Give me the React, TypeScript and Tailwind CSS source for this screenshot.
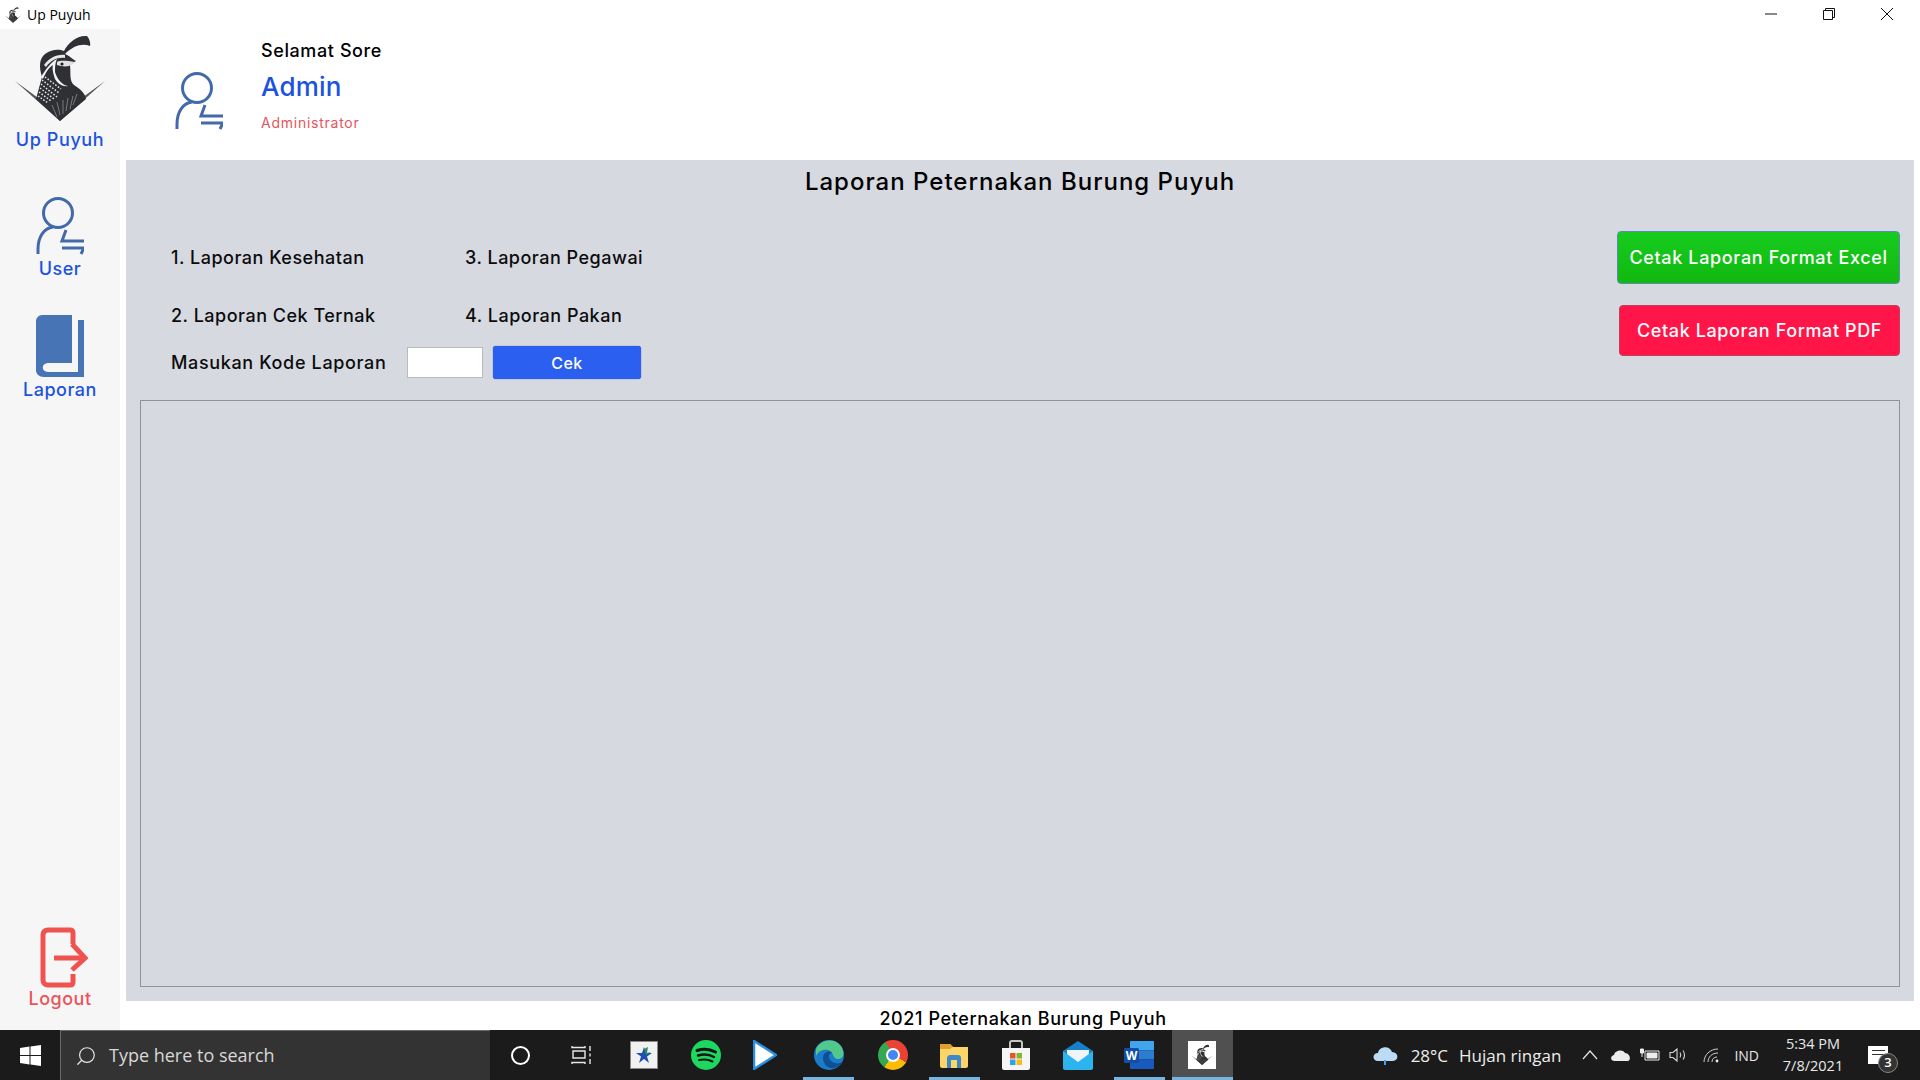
import { Search } from "lucide-react";

const font = "font-['Inter','Liberation_Sans',sans-serif]";
const winFont = "font-['Open_Sans','Noto_Sans',sans-serif]";

function Quail({ className }: { className: string }) {
  return (
    <svg viewBox="0 0 110 100" className={className}>
      <path d="M10 52 L55 92 L100 52 L55 85 Z" fill="#55575a" />
      <path d="M31 70 L37 48 C34 38 34 30 40 25 C47 20 54 20 59 22 C63 14 72 6 82 7 C84 9 86 14 85 17 C77 14 68 17 60 25 C65 27 67 30 71 32 L65 36 C66 44 64 52 69 56 C75 60 80 64 81 70 L55 92 Z" fill="#2f3033" />
      <path d="M36 48 C41 40 46 33 52 30 C50 34 50 38 50 43 C52 50 57 56 63 57 C58 58 53 55 50 50 C48 44 47 39 48 36 C43 39 40 45 38 50 Z" fill="#f4f4f4" />
      <path d="M39 36 C44 29 52 25 60 26 L60 29 C53 28 46 31 41 38 Z" fill="#e8e8e8" />
      <path d="M52 33 C56 31 62 32 70 33 L64 37 C60 38 55 37 52 36 Z" fill="#e2e2e2" />
      <circle cx="57" cy="35" r="1.6" fill="#222" />
      <path d="M37 51 L54 64 M36 55 L52 68 M35 59 L49 70 M34 63 L46 72 M40 48 L56 60 M33 67 L43 74" stroke="#e5e5e5" strokeWidth="1.5" strokeDasharray="1.6 1.6" fill="none" />
      <path d="M47 76 L52 88 M52 73 L55 86 M58 71 L58 85 M63 69 L61 82 M68 67 L65 80 M72 65 L68 76" stroke="#8c8d90" strokeWidth="0.8" fill="none" />
    </svg>
  );
}

function UserIcon({ className }: { className: string }) {
  return (
    <svg viewBox="0 0 48 58" className={className} fill="none" stroke="#4169ab" strokeWidth="3">
      <circle cx="22" cy="16" r="14.5" />
      <path d="M2 57 V52 C2 40 8 31 17 30" />
      <path d="M30 33 L26 44 H48" />
      <path d="M26 51 H48 L45 57" />
    </svg>
  );
}

function BookIcon() {
  return (
    <svg viewBox="0 0 48 62" className="h-[62px] w-[48px]">
      <path d="M6 0 H36 V48 H12 C5 48 5 57 12 57 H42 V5 H48 V62 H8 C3 62 0 59 0 55 V6 C0 3 3 0 6 0 Z" fill="#4674b4" />
    </svg>
  );
}

function LogoutIcon() {
  return (
    <svg viewBox="0 0 48 61" className="ml-[8px] h-[61px] w-[48px]" fill="none" stroke="#ef5350" strokeWidth="5">
      <path d="M33 17 V6 C33 4 32 3 30 3 H8 C5 3 3 5 3 8 V53 C3 56 5 58 8 58 H30 C32 58 33 57 33 55 V47" />
      <path d="M14 31 H44" />
      <path d="M32 17 L45 31 L32 43" />
    </svg>
  );
}

function SideItem({ label, color, children }: { label: string; color: string; children: React.ReactNode }) {
  return (
    <div className="flex flex-col items-center">
      {children}
      <span className={`text-[18px] leading-[22px] font-medium tracking-[0.5px] ${color}`}>{label}</span>
    </div>
  );
}

function TaskIcon({ children }: { children: React.ReactNode }) {
  return <div className="flex h-full w-[61.7px] items-center justify-center">{children}</div>;
}

function Underlined({ children }: { children: React.ReactNode }) {
  return (
    <div className="mx-[5.35px] flex h-full w-[51px] items-center justify-center border-b-[3px] border-[#76b4e4] pt-[3px]">
      {children}
    </div>
  );
}

export default function App() {
  return (
    <div className={`flex h-screen w-[1920px] flex-col overflow-hidden bg-white ${font}`}>
      {/* title bar */}
      <div className="flex h-[29px] items-center">
        <Quail className="ml-[3px] h-[20px] w-[20px]" />
        <span className={`ml-[4px] text-[14px] text-black ${winFont}`}>Up Puyuh</span>
        <div className="ml-auto flex items-center gap-[44px] pr-[26px] pb-[2px]">
          <svg width="14" height="14" viewBox="0 0 14 14" fill="none" stroke="#111"><path d="M1 7 H13" /></svg>
          <svg width="14" height="14" viewBox="0 0 14 14" fill="none" stroke="#111"><path d="M1.5 3.5 H10.5 V12.5 H1.5 Z M3.5 3.5 V1.5 H12.5 V10.5 H10.5" /></svg>
          <svg width="14" height="14" viewBox="0 0 14 14" fill="none" stroke="#111"><path d="M1 1 L13 13 M13 1 L1 13" /></svg>
        </div>
      </div>

      <div className="flex h-[1001px]">
        {/* sidebar */}
        <aside className="flex w-[120px] flex-col items-center bg-[#f6f6f7] pb-[1px]">
          <Quail className="h-[100px] w-[110px]" />
          <span className="text-[18px] leading-[22px] font-medium tracking-[0.6px] text-[#1c52e0]">Up Puyuh</span>
          <div className="mt-[46px] flex flex-col gap-[35px]">
            <SideItem label="User" color="text-[#1c52e0]">
              <UserIcon className="mb-[3px] h-[58px] w-[48px]" />
            </SideItem>
            <SideItem label="Laporan" color="text-[#1c52e0]">
              <div className="mb-[2px]">
                <BookIcon />
              </div>
            </SideItem>
          </div>
          <div className="mt-auto pb-[19px]">
            <SideItem label="Logout" color="text-[#ec5358]">
              <LogoutIcon />
            </SideItem>
          </div>
        </aside>

        <div className="ml-[6px] flex w-[1788px] flex-col">
          {/* greeting */}
          <header className="flex h-[131px] items-start">
            <UserIcon className="mt-[43px] ml-[49px] h-[58px] w-[48px]" />
            <div className="ml-[38px] flex flex-col pt-[10px]">
              <span className="text-[18px] leading-[24px] font-medium tracking-[0.6px] text-black">Selamat Sore</span>
              <span className="mt-[8px] text-[26px] leading-[32px] font-medium tracking-[0.2px] text-[#1c52e0]">Admin</span>
              <span className="mt-[11px] text-[14px] leading-[18px] tracking-[0.75px] text-[#e4545a]">Administrator</span>
            </div>
          </header>

          {/* laporan panel */}
          <main className="flex h-[841px] flex-col bg-[#d6d9e0] px-[14px] pb-[14px]">
            <h1 className="pt-[7px] text-center text-[24px] leading-[30px] font-medium tracking-[1px] text-black">
              Laporan Peternakan Burung Puyuh
            </h1>
            <div className="flex h-[203px] pt-[34px]">
              <div className="mt-[16px] flex flex-col pl-[31px] text-[18px] leading-[22px] font-medium tracking-[0.5px] text-[#0c0c0c]">
                <div className="flex">
                  <span className="w-[294px]">1. Laporan Kesehatan</span>
                  <span>3. Laporan Pegawai</span>
                </div>
                <div className="mt-[36px] flex">
                  <span className="w-[294px]">2. Laporan Cek Ternak</span>
                  <span>4. Laporan Pakan</span>
                </div>
                <div className="mt-[19px] flex items-center">
                  <span className="w-[236px] tracking-[0.65px]">Masukan Kode Laporan</span>
                  <input className="h-[31px] w-[76px] border border-[#b8bac0] bg-white" />
                  <button className="ml-[10px] h-[33px] w-[148px] rounded-[3px] bg-[#2a5ff0] text-[16px] font-medium tracking-[0.5px] text-white shadow-[0_0_1px_#1a3a90]">
                    Cek
                  </button>
                </div>
              </div>
              <div className="ml-auto flex flex-col items-end gap-[21px] text-[18px] font-medium text-white">
                <button className="h-[53px] w-[283px] rounded-[4px] border border-[#5b8ab8] bg-gradient-to-b from-[#17cc1f] to-[#12b80e] tracking-[0.65px]">
                  Cetak Laporan Format Excel
                </button>
                <button className="h-[51px] w-[281px] rounded-[4px] border border-[#c0405a] bg-[#ff1548] tracking-[0.6px]">
                  Cetak Laporan Format PDF
                </button>
              </div>
            </div>
            <section className="flex-1 border border-[#8f929c]"></section>
          </main>

          <footer className="flex h-[29px] items-center justify-center pt-[7px] pl-[6px] text-[18px] leading-[22px] font-medium tracking-[0.6px] text-black">
            2021 Peternakan Burung Puyuh
          </footer>
        </div>
      </div>

      {/* taskbar */}
      <div className={`flex h-[50px] items-center bg-[#1b1b1b] text-[#e4e4e4] ${winFont}`}>
        <div className="flex h-full w-[60px] items-center justify-center">
          <svg width="21" height="21" viewBox="0 0 21 21" fill="#fff">
            <path d="M0 3 L9.5 1.6 V10 H0 Z M10.5 1.4 L21 0 V10 H10.5 Z M0 11 H9.5 V19.4 L0 18 Z M10.5 11 H21 V21 L10.5 19.6 Z" />
          </svg>
        </div>
        <div className="flex h-full w-[430px] items-center border-t border-l border-[#6b6b6b] bg-[#333333] pl-[14px]">
          <Search className="h-[22px] w-[22px] -scale-x-100 text-[#e6e6e6]" strokeWidth={1.3} />
          <span className="ml-[12px] text-[18px] text-[#d8d8d8]">Type here to search</span>
        </div>

        <div className="flex h-full w-[60px] items-center justify-center">
          <div className="h-[19px] w-[19px] rounded-full border-[2.5px] border-white"></div>
        </div>
        <div className="flex h-full w-[63px] items-center justify-center">
          <svg width="22" height="20" viewBox="0 0 22 20" fill="none" stroke="#e8e8e8" strokeWidth="1.4">
            <path d="M1 1 V2.5 H14 V1 M2 6 H14 V13 H2 Z M1 19 V17.5 H14 V19 M19 1 V6 M19 8.5 V11.5 M19 14 V19" />
          </svg>
        </div>

        <TaskIcon>
          <div className="flex h-[28px] w-[28px] items-center justify-center border border-[#888] bg-[#f1f1f1]">
            <svg width="18" height="18" viewBox="0 0 18 18">
              <path d="M9 1 L11 7 L17 7 L12 10.5 L14 17 L9 13 L4 17 L6 10.5 L1 7 L7 7 Z" fill="#1f4fb0" />
              <path d="M9 3 L13 1 L12 7 L16 6 L11 9 Z" fill="#2f8a5b" />
            </svg>
          </div>
        </TaskIcon>
        <TaskIcon>
          <svg width="30" height="30" viewBox="0 0 30 30" fill="none" stroke="#141414" strokeLinecap="round">
            <circle cx="15" cy="15" r="15" fill="#1ed760" stroke="none" />
            <path d="M6 10.5 C12 8.5 19 9 24.5 12" strokeWidth="3" />
            <path d="M7 15.5 C12 14 18.5 14.5 23 17" strokeWidth="2.5" />
            <path d="M8 20 C12.5 19 17.5 19.3 21.5 21.5" strokeWidth="2" />
          </svg>
        </TaskIcon>
        <TaskIcon>
          <svg width="24" height="30" viewBox="0 0 24 30" className="-translate-x-[2px]">
            <path d="M1 1 L23 15 L1 29 Z" fill="#fff" stroke="#2a8fe0" strokeWidth="2.5" strokeLinejoin="round" />
          </svg>
        </TaskIcon>
        <Underlined>
          <svg width="30" height="30" viewBox="0 0 30 30">
            <circle cx="15" cy="15" r="15" fill="#1b7dc9" />
            <path d="M2 9 C6 0 20 -3 27 6 C31 12 30 19 24 19 C18 19 20 11 14 10 C8 9 4 12 2 16 Z" fill="#52c98a" />
            <path d="M9 18 C9 12 15 10 18 13 C13 13 14 21 21 23 C24 24 27 23 29 21 C24 31 10 31 9 18 Z" fill="#0f4f94" />
          </svg>
        </Underlined>
        <div className="w-[2px]"></div>
        <TaskIcon>
          <div className="flex h-[30px] w-[30px] items-center justify-center rounded-full bg-[conic-gradient(#ea4335_0deg_120deg,#fbbc05_120deg_215deg,#34a853_215deg_330deg,#ea4335_330deg)]">
            <div className="h-[14px] w-[14px] rounded-full border-[2px] border-white bg-[#4285f4]"></div>
          </div>
        </TaskIcon>
        <Underlined>
          <svg width="28" height="26" viewBox="0 0 28 26">
            <path d="M0 2 H10 L13 5 H28 V24 C28 25 27 26 26 26 H2 C1 26 0 25 0 24 Z" fill="#fbd568" />
            <path d="M0 2 H10 L13 5 L10 7 H0 Z" fill="#dda22c" />
            <path d="M7 26 V16 C7 14 9 13 10 13 H18 C20 13 21 14 21 16 V26 H17 V18 H11 V26 Z" fill="#3d88c8" />
          </svg>
        </Underlined>
        <TaskIcon>
          <svg width="28" height="30" viewBox="0 0 28 30">
            <path d="M8 9 V3 C8 2 9 1 10 1 H18 C19 1 20 2 20 3 V9" fill="none" stroke="#c6c6c6" strokeWidth="2" />
            <path d="M0 8 H28 V28 C28 29 27 30 26 30 H2 C1 30 0 29 0 28 Z" fill="#f5f5f5" />
            <rect x="8" y="13" width="5.5" height="5.5" fill="#e8542d" />
            <rect x="14.5" y="13" width="5.5" height="5.5" fill="#7fba2c" />
            <rect x="8" y="19.5" width="5.5" height="5.5" fill="#2aa4e8" />
            <rect x="14.5" y="19.5" width="5.5" height="5.5" fill="#fbb81a" />
          </svg>
        </TaskIcon>
        <TaskIcon>
          <svg width="30" height="29" viewBox="0 0 30 29">
            <path d="M0 10 L15 0 L30 10 V28 H0 Z" fill="#1580c9" />
            <path d="M4 9 H26 V15 L15 22 L4 15 Z" fill="#eef6fb" />
            <path d="M0 10 L15 21 L30 10 V27 C30 28 29 29 28 29 H2 C1 29 0 28 0 27 Z" fill="#2cb4ee" />
          </svg>
        </TaskIcon>
        <Underlined>
          <svg width="30" height="28" viewBox="0 0 30 28">
            <rect x="6" y="0" width="24" height="9.5" rx="1" fill="#41a5ee" />
            <rect x="6" y="9.5" width="24" height="9" fill="#2b7cd3" />
            <rect x="6" y="18.5" width="24" height="9.5" rx="1" fill="#185abd" />
            <rect x="0" y="7" width="15" height="15" rx="1.5" fill="#124ea8" />
            <text x="7.5" y="19" textAnchor="middle" fontSize="12" fontWeight="700" fill="#fff">W</text>
          </svg>
        </Underlined>
        <div className="ml-[1.5px] flex h-full w-[61px] items-center justify-center border-b-[3px] border-[#76b4e4] bg-[#505050] pt-[3px]">
          <div className="flex h-[28px] w-[28px] items-center justify-center bg-white">
            <Quail className="h-[26px] w-[26px]" />
          </div>
        </div>

        {/* tray */}
        <div className="ml-auto flex h-full items-center">
          <svg width="27" height="24" viewBox="0 0 27 24">
            <path d="M6 18 C0 18 0 10 6 10 C7 3 18 2 20 9 C27 9 27 18 21 18 Z" fill="#bcdcf5" />
            <path d="M13 17 V22" stroke="#4aa0e8" strokeWidth="2" />
          </svg>
          <span className="ml-[12px] text-[17px] leading-none text-[#ededed]">28°C</span>
          <span className="ml-[11px] text-[17px] leading-none text-[#ededed]">Hujan ringan</span>
          <svg className="ml-[21px]" width="16" height="10" viewBox="0 0 16 10" fill="none" stroke="#e8e8e8" strokeWidth="1.2">
            <path d="M1 9 L8 1 L15 9" />
          </svg>
          <svg className="ml-[13px]" width="20" height="13" viewBox="0 0 20 13">
            <path d="M4 12 C-1 12 -1 7 3 6 C4 1 12 0 14 4 C19 4 21 12 16 12 Z" fill="#ededed" />
          </svg>
          <svg className="ml-[9px]" width="20" height="14" viewBox="0 0 20 14" fill="none" stroke="#ededed">
            <path d="M5 3 H19 V12 H5 Z" />
            <path d="M7 5 H17 V10 H7 Z" fill="#ededed" />
            <path d="M0.5 1 H3.5 V5 H0.5 Z M2 5 V9" fill="#ededed" />
          </svg>
          <svg className="ml-[9px]" width="18" height="16" viewBox="0 0 18 16" fill="none" stroke="#d8d8d8" strokeWidth="1.1">
            <path d="M1 5.5 H4 L8 2 V14 L4 10.5 H1 Z M11 5.5 C12 7 12 9 11 10.5 M14 3.5 C16 6 16 10 14 12.5" />
          </svg>
          <svg className="ml-[16px]" width="17" height="15" viewBox="0 0 17 15" fill="none" stroke="#cfcfcf">
            <path d="M1 14 C1 7 7 1 15 1 M5 14 C5 9 9 5 15 5 M9 14 C9 11 11 9 14 9" />
            <circle cx="14" cy="13" r="1.4" fill="#eee" stroke="none" />
          </svg>
          <span className="ml-[14px] text-[14px] text-[#e8e8e8]">IND</span>
          <div className="ml-[19px] flex w-[70px] flex-col items-center text-[14.5px] leading-[22px] text-[#e8e8e8]">
            <span>5:34 PM</span>
            <span>7/8/2021</span>
          </div>
          <div className="relative mr-[32px] ml-[20px] h-[18px] w-[20px] bg-white">
            <div className="mx-auto mt-[4px] h-[1px] w-[13px] bg-[#333]"></div>
            <div className="mx-auto mt-[3px] h-[1px] w-[13px] bg-[#333]"></div>
            <span className="absolute top-[7px] left-[10px] flex h-[20px] w-[20px] items-center justify-center rounded-full border border-[#888] bg-[#333] text-[13px] font-semibold text-white">
              3
            </span>
          </div>
        </div>
      </div>
    </div>
  );
}
